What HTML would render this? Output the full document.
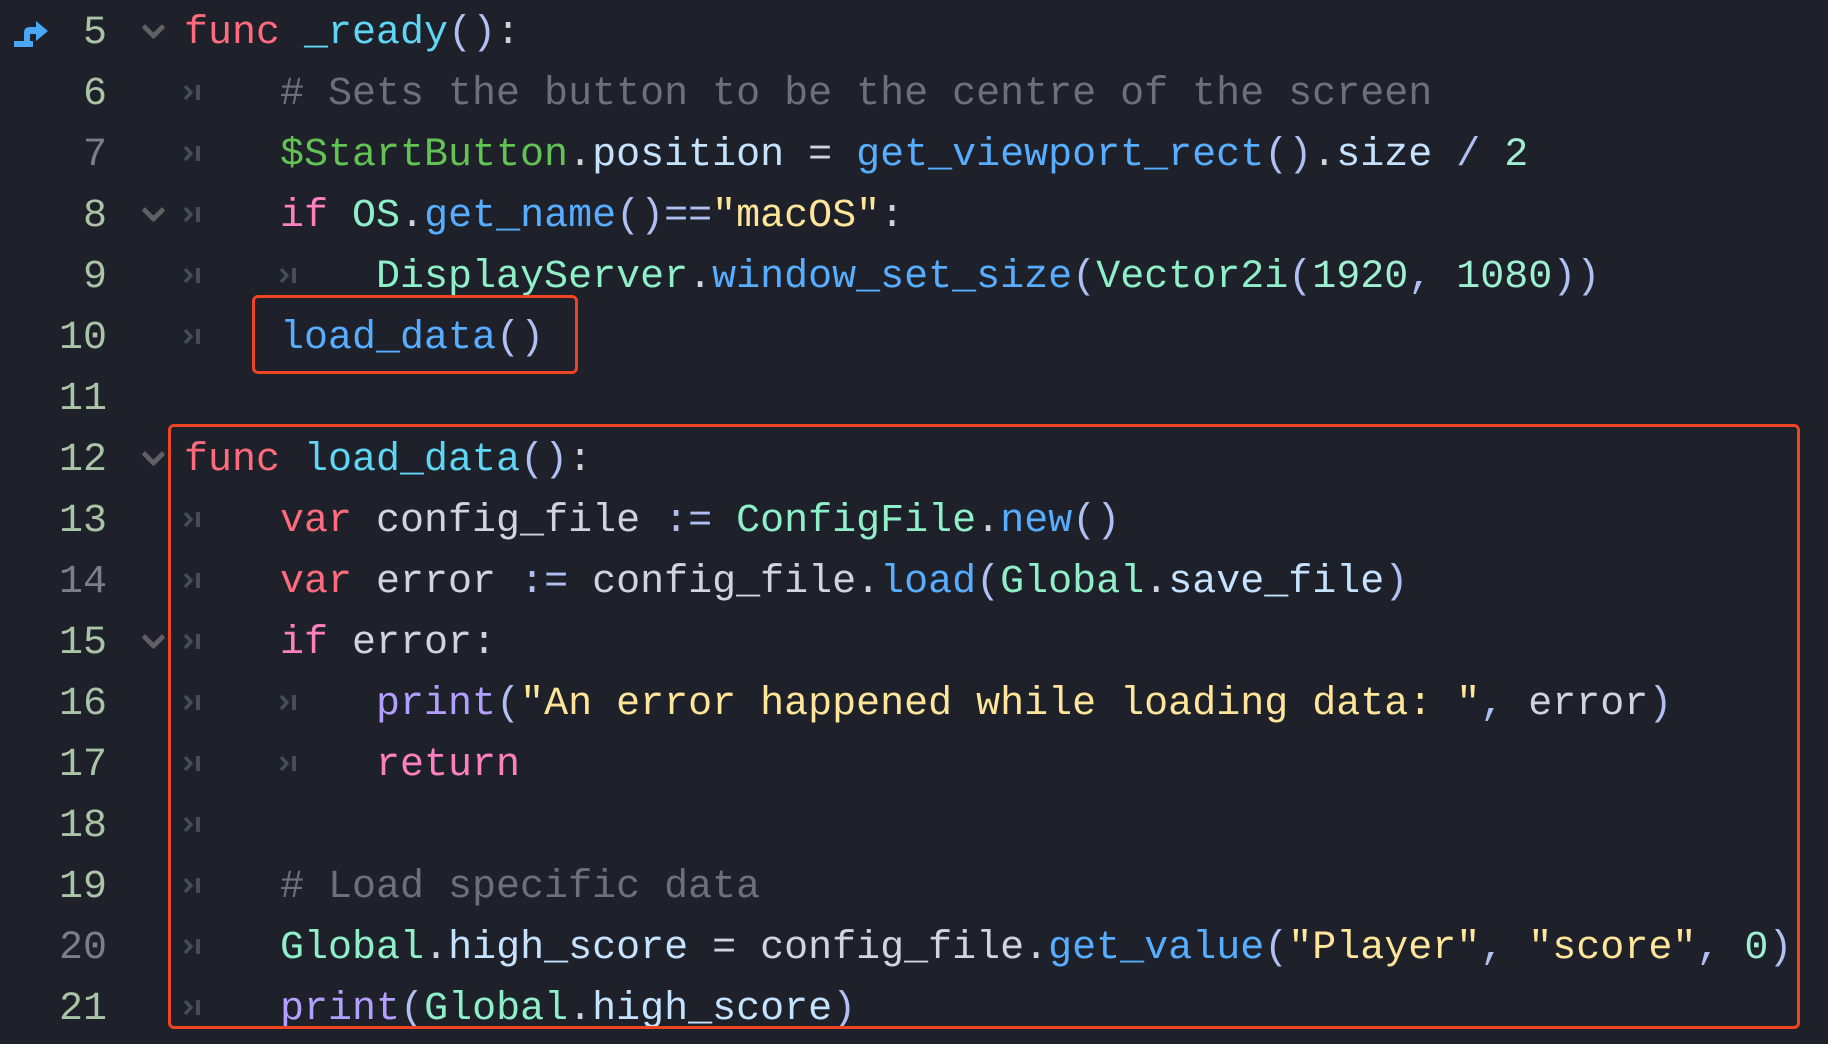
<!DOCTYPE html>
<html><head><meta charset="utf-8"><style>
html,body{margin:0;padding:0;background:#1e2129;width:1828px;height:1044px;overflow:hidden}
.l{position:absolute;left:0;height:61px;line-height:61px;font-family:"Liberation Mono",monospace;font-size:40px;white-space:pre;color:#d0d4dc}
.n{position:absolute;left:0;width:107px;text-align:right;color:#a9c4a6}
.n.d{color:#7c7f85}
.c{position:absolute;left:184px}
.t{position:absolute;top:20px;width:18px;height:17px}
.f{position:absolute;left:145px;top:16px;width:12px;height:12px;border-right:5px solid #5e6066;border-bottom:5px solid #5e6066;transform:rotate(45deg);border-radius:2px}
.kw{color:#ff6b7c}.pk{color:#ff80c0}.fn{color:#5fd6f5}.bl{color:#57adff}.cm{color:#6d7077}
.gr{color:#62c254}.ty{color:#8ff0c8}.st{color:#ffe59a}.pr{color:#b0c0f5}.pu{color:#b0a0ff}.me{color:#c5e2ff}.nu{color:#9ff0d0}
.box{position:absolute;border:3.5px solid #ee4422;border-radius:6px;box-sizing:border-box}
</style></head><body>
<svg width="0" height="0" style="position:absolute"><defs><g id="tb"><path d="M1 2l6 6.5-6 6.5" fill="none" stroke="#454c5a" stroke-width="3.5"/><rect x="12" y="1" width="4" height="15" fill="#454c5a"/></g></defs></svg>
<svg style="position:absolute;left:12px;top:15px" width="40" height="34" viewBox="0 0 40 34"><path d="M2 26h19v6H2z M12 28V18q0-6 6-6h6V6l12 10-12 10v-7h-5q-1 0-1 1v8z" fill="#4ba6f5"/></svg>

<div class="l" style="top:3px"><span class="n">5</span><span class="f"></span><span class="c"><span class="kw">func</span> <span class="fn">_ready</span><span class="pr">()</span>:</span></div>
<div class="l" style="top:64px"><span class="n">6</span><svg class="t" style="left:184px"><use href="#tb"/></svg><span class="c"><span class="cm">    # Sets the button to be the centre of the screen</span></span></div>
<div class="l" style="top:125px"><span class="n d">7</span><svg class="t" style="left:184px"><use href="#tb"/></svg><span class="c">    <span class="gr">$StartButton</span>.<span class="me">position</span> = <span class="bl">get_viewport_rect</span><span class="pr">()</span>.<span class="me">size</span> <span class="pr">/</span> <span class="nu">2</span></span></div>
<div class="l" style="top:186px"><span class="n">8</span><span class="f"></span><svg class="t" style="left:184px"><use href="#tb"/></svg><span class="c">    <span class="pk">if</span> <span class="ty">OS</span>.<span class="bl">get_name</span><span class="pr">()</span><span class="pr">==</span><span class="st">"macOS"</span>:</span></div>
<div class="l" style="top:247px"><span class="n">9</span><svg class="t" style="left:184px"><use href="#tb"/></svg><svg class="t" style="left:280px"><use href="#tb"/></svg><span class="c">        <span class="ty">DisplayServer</span>.<span class="bl">window_set_size</span><span class="pr">(</span><span class="ty">Vector2i</span><span class="pr">(</span><span class="nu">1920</span><span class="pr">,</span> <span class="nu">1080</span><span class="pr">))</span></span></div>
<div class="l" style="top:308px"><span class="n">10</span><svg class="t" style="left:184px"><use href="#tb"/></svg><span class="c">    <span class="bl">load_data</span><span class="pr">()</span></span></div>
<div class="l" style="top:369px"><span class="n">11</span></div>
<div class="l" style="top:430px"><span class="n">12</span><span class="f"></span><span class="c"><span class="kw">func</span> <span class="fn">load_data</span><span class="pr">()</span>:</span></div>
<div class="l" style="top:491px"><span class="n">13</span><svg class="t" style="left:184px"><use href="#tb"/></svg><span class="c">    <span class="kw">var</span> config_file <span class="pr">:=</span> <span class="ty">ConfigFile</span>.<span class="bl">new</span><span class="pr">()</span></span></div>
<div class="l" style="top:552px"><span class="n d">14</span><svg class="t" style="left:184px"><use href="#tb"/></svg><span class="c">    <span class="kw">var</span> error <span class="pr">:=</span> config_file.<span class="bl">load</span><span class="pr">(</span><span class="ty">Global</span>.<span class="me">save_file</span><span class="pr">)</span></span></div>
<div class="l" style="top:613px"><span class="n">15</span><span class="f"></span><svg class="t" style="left:184px"><use href="#tb"/></svg><span class="c">    <span class="pk">if</span> error:</span></div>
<div class="l" style="top:674px"><span class="n">16</span><svg class="t" style="left:184px"><use href="#tb"/></svg><svg class="t" style="left:280px"><use href="#tb"/></svg><span class="c">        <span class="pu">print</span><span class="pr">(</span><span class="st">"An error happened while loading data: "</span><span class="pr">,</span> error<span class="pr">)</span></span></div>
<div class="l" style="top:735px"><span class="n">17</span><svg class="t" style="left:184px"><use href="#tb"/></svg><svg class="t" style="left:280px"><use href="#tb"/></svg><span class="c">        <span class="pk">return</span></span></div>
<div class="l" style="top:796px"><span class="n">18</span><svg class="t" style="left:184px"><use href="#tb"/></svg></div>
<div class="l" style="top:857px"><span class="n">19</span><svg class="t" style="left:184px"><use href="#tb"/></svg><span class="c"><span class="cm">    # Load specific data</span></span></div>
<div class="l" style="top:918px"><span class="n d">20</span><svg class="t" style="left:184px"><use href="#tb"/></svg><span class="c">    <span class="ty">Global</span>.<span class="me">high_score</span> = config_file.<span class="bl">get_value</span><span class="pr">(</span><span class="st">"Player"</span><span class="pr">,</span> <span class="st">"score"</span><span class="pr">,</span> <span class="nu">0</span><span class="pr">)</span></span></div>
<div class="l" style="top:979px"><span class="n">21</span><svg class="t" style="left:184px"><use href="#tb"/></svg><span class="c">    <span class="pu">print</span><span class="pr">(</span><span class="ty">Global</span>.<span class="me">high_score</span><span class="pr">)</span></span></div>

<div class="box" style="left:252px;top:295px;width:326px;height:79px"></div>
<div class="box" style="left:168px;top:424px;width:1632px;height:605px"></div>
</body></html>
